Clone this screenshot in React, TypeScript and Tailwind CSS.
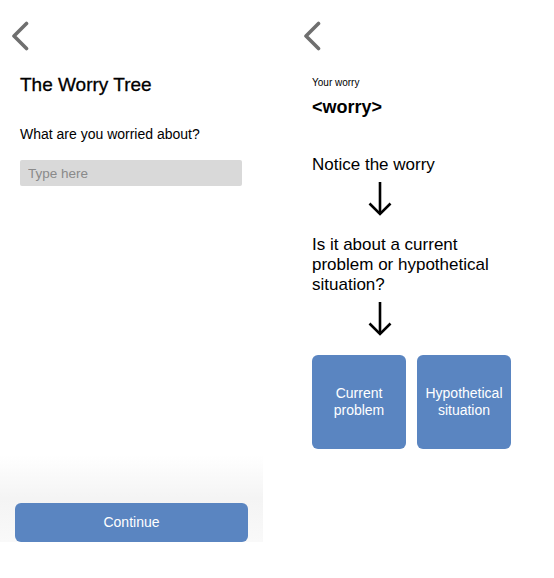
const Chevron = () => (
  <svg width="18" height="30" viewBox="0 0 18 30" className="ml-[11px] mt-[21px] shrink-0">
    <polyline
      points="15.5,2.5 3,15 15.5,27.5"
      fill="none"
      stroke="#6f6f6f"
      strokeWidth="3.6"
      strokeLinecap="round"
      strokeLinejoin="round"
    />
  </svg>
);

const ArrowDown = ({ className }: { className?: string }) => (
  <svg width="24" height="35" viewBox="0 0 24 35" className={className}>
    <line x1="12" y1="1" x2="12" y2="33" stroke="#000" strokeWidth="2.6" />
    <polyline
      points="1.5,22.5 12,33 22.5,22.5"
      fill="none"
      stroke="#000"
      strokeWidth="2.6"
      strokeLinejoin="miter"
    />
  </svg>
);

const App = () => {
  return (
    <div className="w-[554px] h-[578px] bg-white flex flex-row font-['Liberation_Sans',Arial,sans-serif] text-black overflow-hidden">
      {/* first screen */}
      <div className="w-[263px] h-[578px] flex flex-col shrink-0">
        <Chevron />
        <h1 className="ml-[20px] mt-[23px] text-[19px] leading-[22px] font-medium [-webkit-text-stroke:0.3px_#000]">
          The Worry Tree
        </h1>
        <p className="ml-[20px] mt-[30px] text-[14px] leading-[16px]">What are you worried about?</p>
        <input
          type="text"
          placeholder="Type here"
          className="ml-[20px] mt-[18px] w-[222px] h-[26px] bg-[#d9d9d9] rounded-[2px] px-[8px] text-[13.5px] placeholder:text-[#8a8a8a] outline-none"
        />
        <div className="flex-1" />
        <div className="h-[87px] bg-gradient-to-b from-white via-[#f4f4f4] to-[#f9f9f9] flex items-end px-[15px]">
          <button className="w-[234px] h-[39px] bg-[#5a85c1] rounded-[6px] text-white text-[14px]">
            Continue
          </button>
        </div>
        <div className="h-[36px]" />
      </div>

      {/* second screen */}
      <div className="w-[262px] ml-[29px] flex flex-col shrink-0">
        <Chevron />
        <div className="pl-[20px] flex flex-col">
          <span className="mt-[26px] text-[10px] leading-[12px]">Your worry</span>
          <span className="mt-[7px] text-[18px] leading-[22px] font-bold">&lt;worry&gt;</span>
          <span className="mt-[37px] text-[17px] leading-[20px]">Notice the worry</span>
          <ArrowDown className="ml-[56px] mt-[6px]" />
          <p className="mt-[19px] w-[200px] text-[17px] leading-[20px]">
            Is it about a current problem or hypothetical situation?
          </p>
          <ArrowDown className="ml-[56px] mt-[6px]" />
          <div className="mt-[19px] flex flex-row gap-[11px]">
            <button className="w-[94px] h-[94px] bg-[#5a85c1] rounded-[6px] text-white text-[14px] leading-[17px] flex items-center justify-center text-center">
              Current
              <br />
              problem
            </button>
            <button className="w-[94px] h-[94px] bg-[#5a85c1] rounded-[6px] text-white text-[14px] leading-[17px] flex items-center justify-center text-center">
              Hypothetical
              <br />
              situation
            </button>
          </div>
        </div>
      </div>
    </div>
  );
};

export default App;
